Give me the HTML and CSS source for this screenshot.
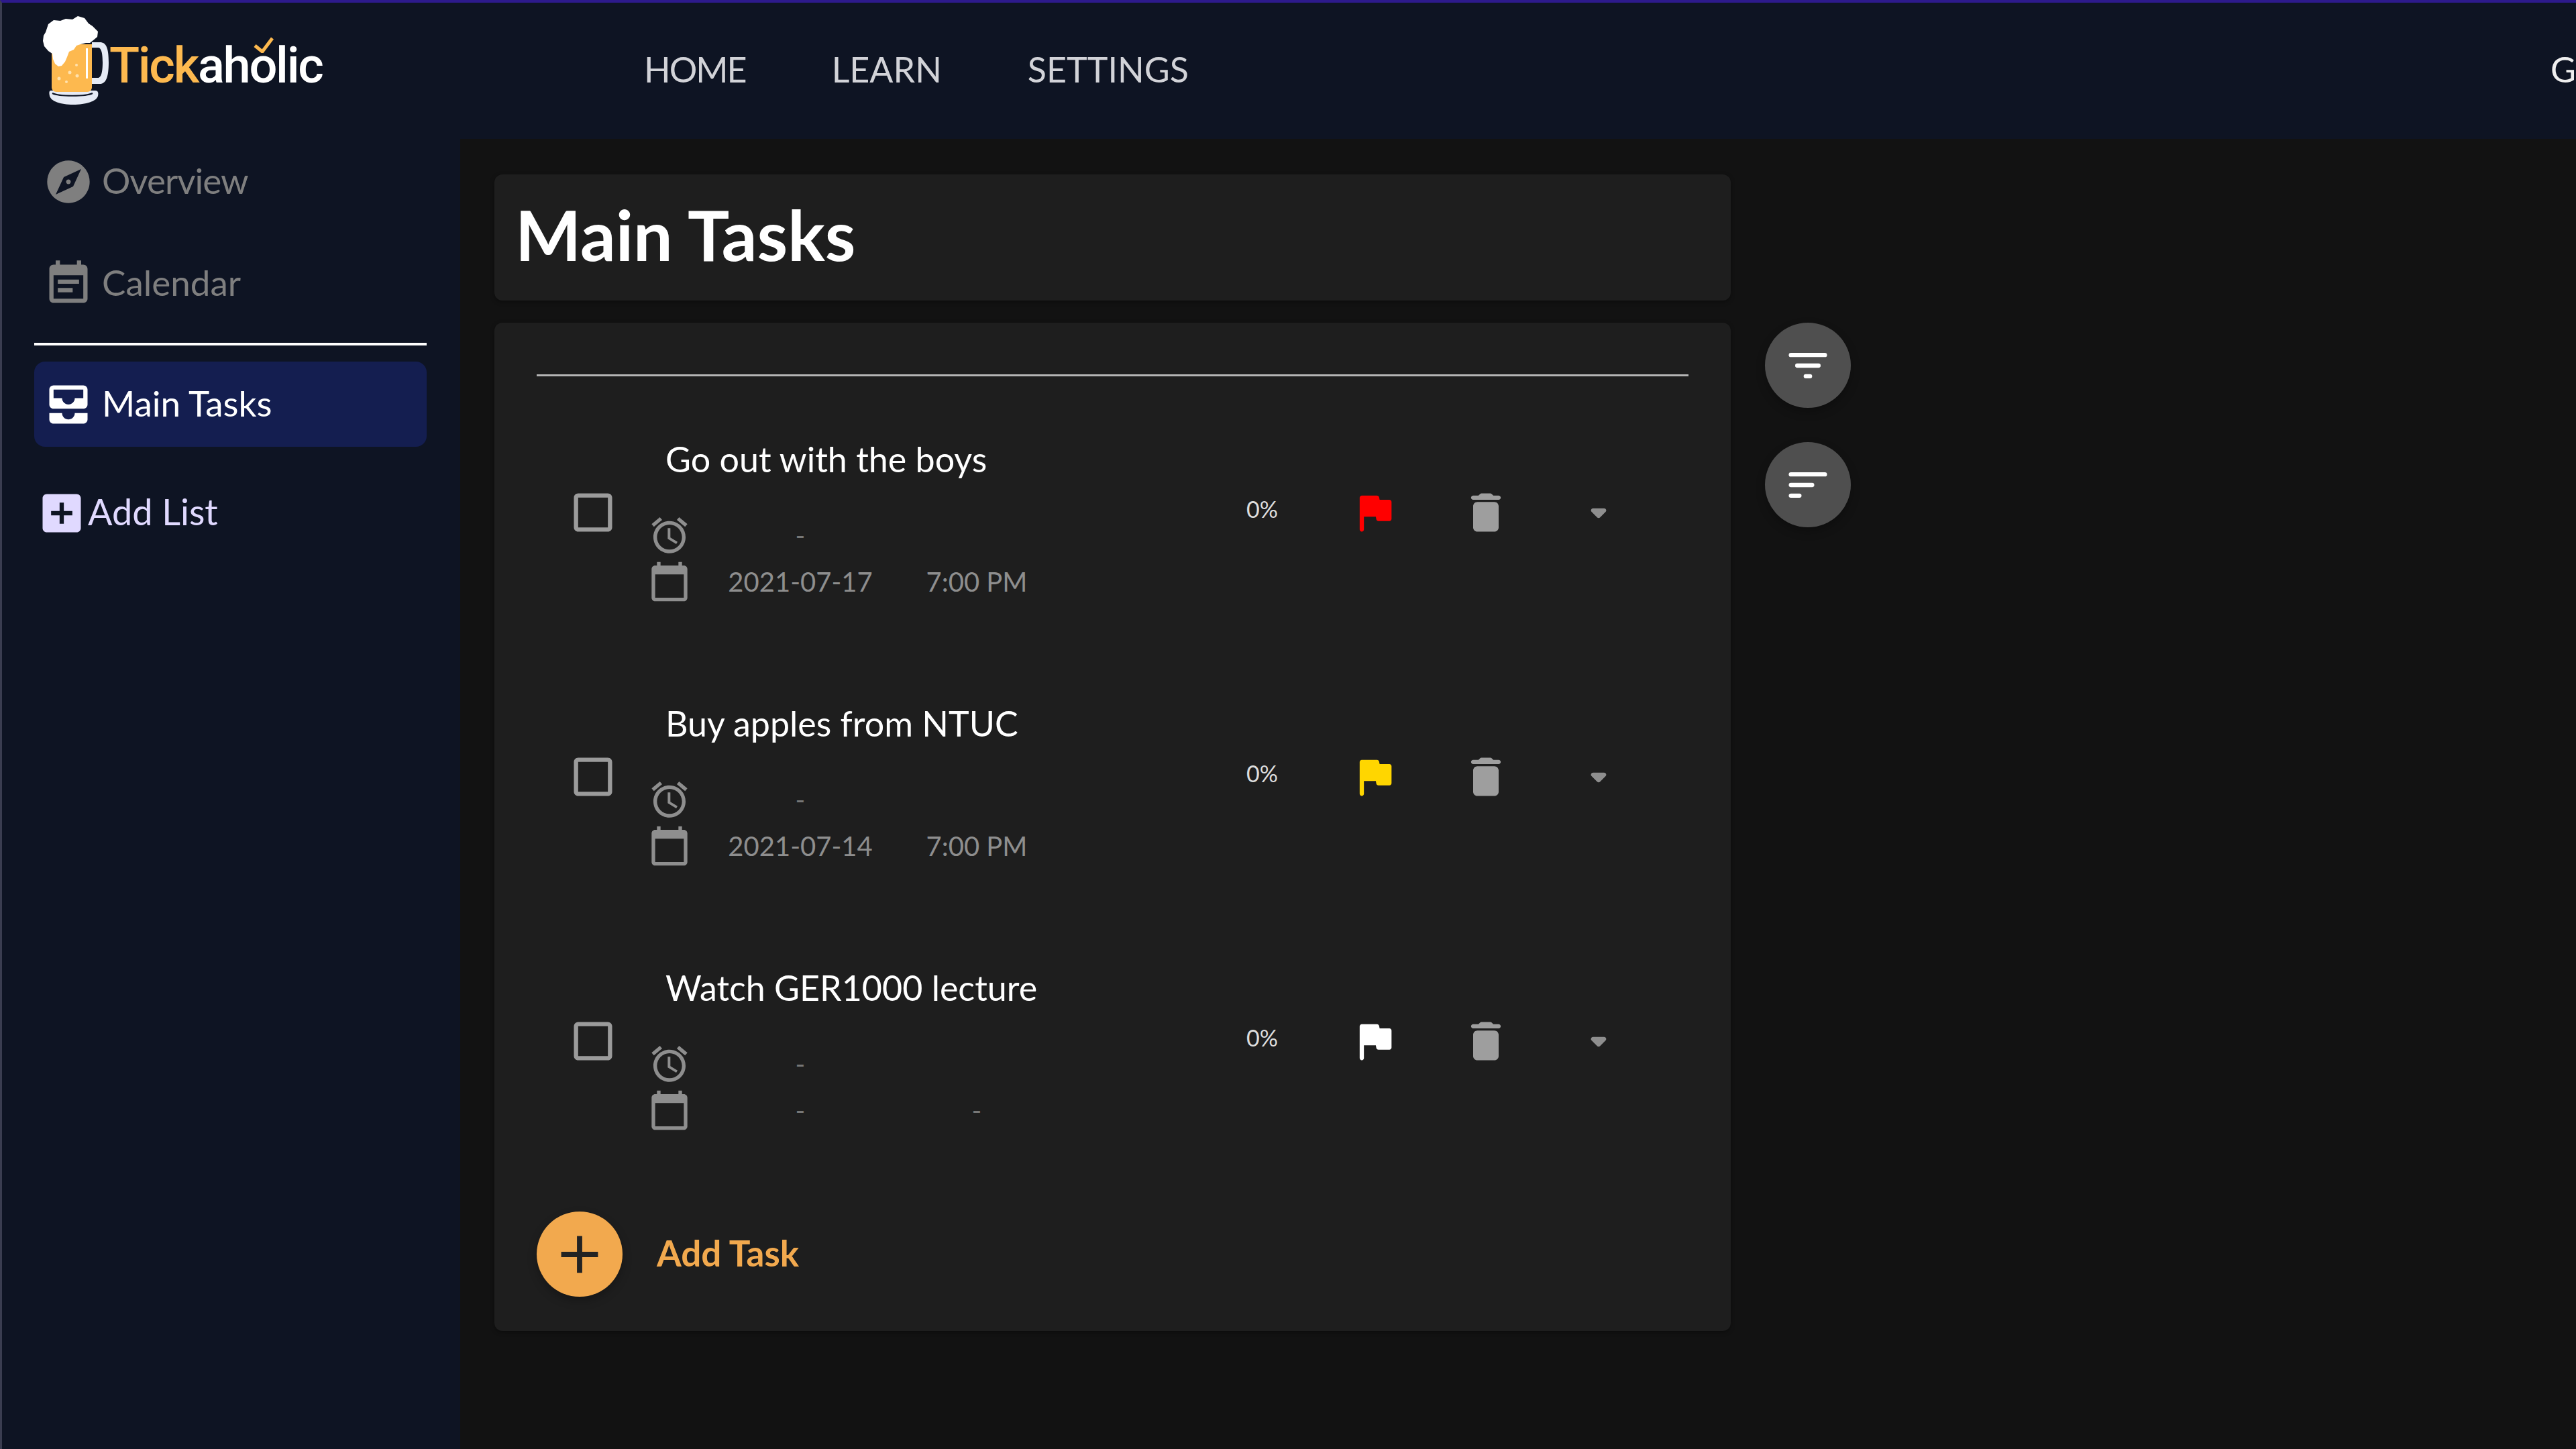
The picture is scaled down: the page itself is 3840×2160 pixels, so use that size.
FILE: index.html
```html
<!DOCTYPE html>
<html lang="en">
<head>
<meta charset="utf-8">
<title>Tickaholic</title>
<link rel="stylesheet" href="styles.css">
</head>
<body>
<header class="topbar">
  <a class="logo">
    <svg class="mug" viewBox="60 20 106 140" width="106" height="140">
      <path fill="#e6ebf5" d="M76 135h66c4 0 5 3 4 8-2 8-18 13-37 13s-33-5-35-13c-1-5-1-8 2-8z"/>
      <path fill="none" stroke="#0e1423" stroke-width="2" d="M78 139c10 5 50 5 60 0"/>
      <path fill="#e6ebf5" d="M137 63h12c9 0 13 8 13 30s-4 32-13 32h-12v-9h9c4 0 7-6 7-23s-3-22-7-22h-9z"/>
      <path fill="#fdb94f" d="M77 66h60v64c0 4-3 7-7 7H84c-4 0-7-3-7-7z"/>
      <path fill="#fff" d="M128 72h3v45h-3z"/>
      <path fill="#fff" d="M72 36l8-6 10 1 8-3 10 1 8-5 10 3 6 8 6 4 8 8-1 8-6 5-5 4-6 0-8 2-6 2-4 6-7 3-3 8-3 7-5 6-5 1-5-4-3-7-1-8-6-4-6-7-2-8 1-8 3-5z"/>
      <g fill="#ffe2ae"><circle cx="88" cy="117" r="2.5"/><circle cx="104" cy="108" r="2.5"/><circle cx="115" cy="113" r="2.5"/><circle cx="114" cy="97" r="2"/><circle cx="99" cy="122" r="2"/></g>
    </svg>
    <span class="logo-text"><span class="logo-tick">Tick</span>aholic</span>
    <svg class="logo-check" viewBox="0 0 30 24" width="30" height="24"><path fill="none" stroke="#fdb94f" stroke-width="5" d="M2 13l11 9L28 2"/></svg>
  </a>
  <nav class="nav">
    <a class="nav-home">HOME</a>
    <a>LEARN</a>
    <a>SETTINGS</a>
  </nav>
  <div class="user">G</div>
</header>
<div class="body">
  <aside class="sidebar">
    <div class="side-item muted side-tight">
      <svg class="ic76" viewBox="0 0 24 24"><path d="M12 10.9c-.61 0-1.1.49-1.1 1.1s.49 1.1 1.1 1.1c.61 0 1.1-.49 1.1-1.1s-.49-1.1-1.1-1.1zM12 2C6.48 2 2 6.48 2 12s4.48 10 10 10 10-4.48 10-10S17.52 2 12 2zm2.19 12.19L6 18l3.81-8.19L18 6l-3.79 8.19z"/></svg>
      <span>Overview</span>
    </div>
    <div class="side-item muted">
      <svg class="ic76" viewBox="0 0 24 24"><path d="M17 10H7v2h10v-2zm2-7h-1V1h-2v2H8V1H6v2H5c-1.11 0-1.99.9-1.99 2L3 19c0 1.1.89 2 2 2h14c1.1 0 2-.9 2-2V5c0-1.1-.9-2-2-2zm0 16H5V8h14v11zm-5-5H7v2h7v-2z"/></svg>
      <span>Calendar</span>
    </div>
    <hr class="side-rule">
    <div class="side-item active">
      <svg class="ic76" viewBox="0 0 24 24"><path d="M19 3H5c-1.1 0-2 .9-2 2v7c0 1.1.9 2 2 2h14c1.1 0 2-.9 2-2V5c0-1.1-.9-2-2-2zm0 6h-4c0 1.62-1.38 3-3 3s-3-1.38-3-3H5V5h14v4zm-4 7h6v3c0 1.1-.9 2-2 2H5c-1.1 0-2-.9-2-2v-3h6c0 1.66 1.34 3 3 3s3-1.34 3-3z"/></svg>
      <span>Main Tasks</span>
    </div>
    <div class="add-list">
      <svg class="ic76" viewBox="0 0 24 24"><path d="M19 3H5c-1.11 0-2 .9-2 2v14c0 1.1.89 2 2 2h14c1.1 0 2-.9 2-2V5c0-1.1-.9-2-2-2zm-2 10h-4v4h-2v-4H7v-2h4V7h2v4h4v2z"/></svg>
      <span>Add List</span>
    </div>
  </aside>
  <main class="main">
    <div class="column">
      <section class="card title-card"><h1>Main Tasks</h1></section>
      <section class="card list-card">
        <hr class="list-rule">

        <div class="row">
          <svg class="ic76 check" viewBox="0 0 24 24"><path d="M19 5v14H5V5h14m0-2H5c-1.1 0-2 .9-2 2v14c0 1.1.9 2 2 2h14c1.1 0 2-.9 2-2V5c0-1.1-.9-2-2-2z"/></svg>
          <div class="details">
            <div class="task-title">Go out with the boys</div>
            <div class="meta">
              <svg class="ic64" viewBox="0 0 24 24"><path d="M22 5.72l-4.6-3.86-1.29 1.53 4.6 3.86L22 5.72zM7.88 3.39L6.6 1.86 2 5.71l1.29 1.53 4.59-3.85zM12.5 8H11v6l4.75 2.85.75-1.23-4-2.37V8zM12 4c-4.97 0-9 4.03-9 9s4.02 9 9 9c4.97 0 9-4.03 9-9s-4.03-9-9-9zm0 16c-3.87 0-7-3.13-7-7s3.13-7 7-7 7 3.13 7 7-3.13 7-7 7z"/></svg>
              <span class="dash">-</span><span></span>
              <svg class="ic64" viewBox="0 0 24 24"><path d="M20 3h-1V1h-2v2H7V1H5v2H4c-1.1 0-2 .9-2 2v16c0 1.1.9 2 2 2h16c1.1 0 2-.9 2-2V5c0-1.1-.9-2-2-2zm0 18H4V8h16v13z"/></svg>
              <span>2021-07-17</span><span>7:00 PM</span>
            </div>
          </div>
          <span class="pct">0%</span>
          <svg class="ic76 flag flag-red" viewBox="0 0 24 24"><path d="M14.4 6l-.24-1.2c-.09-.46-.5-.8-.98-.8H6c-.55 0-1 .45-1 1v15c0 .55.45 1 1 1s1-.45 1-1v-6h5.6l.24 1.2c.09.47.5.8.98.8H19c.55 0 1-.45 1-1V7c0-.55-.45-1-1-1h-4.6z"/></svg>
          <svg class="ic76 trash" viewBox="0 0 24 24"><path d="M6 19c0 1.1.9 2 2 2h8c1.1 0 2-.9 2-2V9c0-1.1-.9-2-2-2H8c-1.1 0-2 .9-2 2v10zM18 4h-2.5l-.71-.71c-.18-.18-.44-.29-.7-.29H9.91c-.26 0-.52.11-.7.29L8.5 4H6c-.55 0-1 .45-1 1s.45 1 1 1h12c.55 0 1-.45 1-1s-.45-1-1-1z"/></svg>
          <svg class="ic76 caret" viewBox="0 0 24 24"><path d="M8.71 11.71l2.59 2.59c.39.39 1.02.39 1.41 0l2.59-2.59c.63-.63.18-1.71-.71-1.71H9.41c-.89 0-1.33 1.08-.7 1.71z"/></svg>
        </div>

        <div class="row">
          <svg class="ic76 check" viewBox="0 0 24 24"><path d="M19 5v14H5V5h14m0-2H5c-1.1 0-2 .9-2 2v14c0 1.1.9 2 2 2h14c1.1 0 2-.9 2-2V5c0-1.1-.9-2-2-2z"/></svg>
          <div class="details">
            <div class="task-title">Buy apples from NTUC</div>
            <div class="meta">
              <svg class="ic64" viewBox="0 0 24 24"><path d="M22 5.72l-4.6-3.86-1.29 1.53 4.6 3.86L22 5.72zM7.88 3.39L6.6 1.86 2 5.71l1.29 1.53 4.59-3.85zM12.5 8H11v6l4.75 2.85.75-1.23-4-2.37V8zM12 4c-4.97 0-9 4.03-9 9s4.02 9 9 9c4.97 0 9-4.03 9-9s-4.03-9-9-9zm0 16c-3.87 0-7-3.13-7-7s3.13-7 7-7 7 3.13 7 7-3.13 7-7 7z"/></svg>
              <span class="dash">-</span><span></span>
              <svg class="ic64" viewBox="0 0 24 24"><path d="M20 3h-1V1h-2v2H7V1H5v2H4c-1.1 0-2 .9-2 2v16c0 1.1.9 2 2 2h16c1.1 0 2-.9 2-2V5c0-1.1-.9-2-2-2zm0 18H4V8h16v13z"/></svg>
              <span>2021-07-14</span><span>7:00 PM</span>
            </div>
          </div>
          <span class="pct">0%</span>
          <svg class="ic76 flag flag-yellow" viewBox="0 0 24 24"><path d="M14.4 6l-.24-1.2c-.09-.46-.5-.8-.98-.8H6c-.55 0-1 .45-1 1v15c0 .55.45 1 1 1s1-.45 1-1v-6h5.6l.24 1.2c.09.47.5.8.98.8H19c.55 0 1-.45 1-1V7c0-.55-.45-1-1-1h-4.6z"/></svg>
          <svg class="ic76 trash" viewBox="0 0 24 24"><path d="M6 19c0 1.1.9 2 2 2h8c1.1 0 2-.9 2-2V9c0-1.1-.9-2-2-2H8c-1.1 0-2 .9-2 2v10zM18 4h-2.5l-.71-.71c-.18-.18-.44-.29-.7-.29H9.91c-.26 0-.52.11-.7.29L8.5 4H6c-.55 0-1 .45-1 1s.45 1 1 1h12c.55 0 1-.45 1-1s-.45-1-1-1z"/></svg>
          <svg class="ic76 caret" viewBox="0 0 24 24"><path d="M8.71 11.71l2.59 2.59c.39.39 1.02.39 1.41 0l2.59-2.59c.63-.63.18-1.71-.71-1.71H9.41c-.89 0-1.33 1.08-.7 1.71z"/></svg>
        </div>

        <div class="row">
          <svg class="ic76 check" viewBox="0 0 24 24"><path d="M19 5v14H5V5h14m0-2H5c-1.1 0-2 .9-2 2v14c0 1.1.9 2 2 2h14c1.1 0 2-.9 2-2V5c0-1.1-.9-2-2-2z"/></svg>
          <div class="details">
            <div class="task-title">Watch GER1000 lecture</div>
            <div class="meta">
              <svg class="ic64" viewBox="0 0 24 24"><path d="M22 5.72l-4.6-3.86-1.29 1.53 4.6 3.86L22 5.72zM7.88 3.39L6.6 1.86 2 5.71l1.29 1.53 4.59-3.85zM12.5 8H11v6l4.75 2.85.75-1.23-4-2.37V8zM12 4c-4.97 0-9 4.03-9 9s4.02 9 9 9c4.97 0 9-4.03 9-9s-4.03-9-9-9zm0 16c-3.87 0-7-3.13-7-7s3.13-7 7-7 7 3.13 7 7-3.13 7-7 7z"/></svg>
              <span class="dash">-</span><span></span>
              <svg class="ic64" viewBox="0 0 24 24"><path d="M20 3h-1V1h-2v2H7V1H5v2H4c-1.1 0-2 .9-2 2v16c0 1.1.9 2 2 2h16c1.1 0 2-.9 2-2V5c0-1.1-.9-2-2-2zm0 18H4V8h16v13z"/></svg>
              <span class="dash">-</span><span class="dash">-</span>
            </div>
          </div>
          <span class="pct">0%</span>
          <svg class="ic76 flag flag-white" viewBox="0 0 24 24"><path d="M14.4 6l-.24-1.2c-.09-.46-.5-.8-.98-.8H6c-.55 0-1 .45-1 1v15c0 .55.45 1 1 1s1-.45 1-1v-6h5.6l.24 1.2c.09.47.5.8.98.8H19c.55 0 1-.45 1-1V7c0-.55-.45-1-1-1h-4.6z"/></svg>
          <svg class="ic76 trash" viewBox="0 0 24 24"><path d="M6 19c0 1.1.9 2 2 2h8c1.1 0 2-.9 2-2V9c0-1.1-.9-2-2-2H8c-1.1 0-2 .9-2 2v10zM18 4h-2.5l-.71-.71c-.18-.18-.44-.29-.7-.29H9.91c-.26 0-.52.11-.7.29L8.5 4H6c-.55 0-1 .45-1 1s.45 1 1 1h12c.55 0 1-.45 1-1s-.45-1-1-1z"/></svg>
          <svg class="ic76 caret" viewBox="0 0 24 24"><path d="M8.71 11.71l2.59 2.59c.39.39 1.02.39 1.41 0l2.59-2.59c.63-.63.18-1.71-.71-1.71H9.41c-.89 0-1.33 1.08-.7 1.71z"/></svg>
        </div>

        <div class="add-task">
          <span class="fab fab-orange"><svg class="ic94" viewBox="0 0 24 24"><path d="M19 13h-6v6h-2v-6H5v-2h6V5h2v6h6v2z"/></svg></span>
          <span class="add-task-label">Add Task</span>
        </div>
      </section>
    </div>
    <div class="fabs">
      <span class="fab fab-grey"><svg class="ic76" viewBox="0 0 24 24"><rect x="3" y="6" width="18" height="2" rx="1"/><rect x="6" y="11" width="12" height="2" rx="1"/><rect x="10" y="16" width="4" height="2" rx="1"/></svg></span>
      <span class="fab fab-grey"><svg class="ic76" viewBox="0 0 24 24"><rect x="3" y="6" width="18" height="2" rx="1"/><rect x="3" y="11" width="12" height="2" rx="1"/><rect x="3" y="16" width="6" height="2" rx="1"/></svg></span>
    </div>
  </main>
</div>
</body>
</html>
```

FILE: styles.css
```css
* { box-sizing: border-box; }
html, body { margin: 0; padding: 0; }
body {
  width: 3840px;
  height: 2160px;
  overflow: hidden;
  display: flex;
  flex-direction: column;
  background: #0e1423;
  border-top: 4px solid #2d1a8c;
  border-left: 3px solid #3a3d50;
  font-family: "Lato", "Noto Sans", sans-serif;
  color: #fff;
}
svg { display: block; flex: none; fill: currentColor; }
.ic76 { width: 76px; height: 76px; }
.ic64 { width: 64px; height: 64px; }
.ic94 { width: 94px; height: 94px; }

/* top bar */
.topbar { height: 203px; flex: none; display: flex; align-items: center; }
.logo { position: relative; width: 957px; display: flex; align-items: flex-start; height: 203px; flex: none; }
.mug { margin: 16px 0 0 57px; flex: none; }
.logo-text { margin: 54px 0 0 -3px; font: 500 74px/80px "Roboto", sans-serif; letter-spacing: -2.3px; color: #fff; }
.logo-tick { color: #fdb94f; }
.logo-check { position: absolute; left: 375px; top: 51px; }
.nav { display: flex; gap: 128px; font-size: 52px; color: #d2d3d8; margin-top: -5px; }
.nav-home { letter-spacing: -2px; }
.user { margin-left: auto; width: 38px; font-size: 52px; color: #eee; margin-top: -5px; }

/* layout */
.body { flex: 1; display: flex; min-height: 0; }
.sidebar { width: 683px; flex: none; padding: 0 50px 0 48px; }
.main { flex: 1; background: #121212; display: flex; align-items: flex-start; padding: 53px 0 0 51px; gap: 51px; }
.column { width: 1843px; display: flex; flex-direction: column; gap: 33px; }

/* sidebar */
.side-item { display: flex; align-items: center; gap: 12px; height: 127px; padding-left: 13px; font-size: 53px; margin-bottom: 25px; border-radius: 16px; }
.side-item span { margin-bottom: 5px; }
.side-tight { letter-spacing: -1px; }
.muted { color: #7f7f7f; }
.active { background: #141e50; color: #fff; margin-bottom: 0; }
.side-rule { border: 0; height: 4px; background: #fff; margin: 21px 0 24px; }
.add-list { display: flex; align-items: center; color: #e0d9ff; font-size: 54px; margin: 61px 0 0 3px; gap: 1px; }
.add-list span { margin-bottom: 5px; }

/* cards */
.card { background: #1e1e1e; border-radius: 12px; box-shadow: 0 2px 6px rgba(0,0,0,.35); }
.title-card { height: 188px; padding: 0 0 10px 31px; display: flex; align-items: center; }
.title-card h1 { margin: 0; font-size: 104px; font-weight: 700; line-height: 1; }
.list-card { padding: 77px 63px 51px; }
.list-rule { border: 0; height: 3px; background: #b5b5b5; margin: 0 0 6px; }

/* rows */
.row { height: 394px; display: flex; align-items: center; padding-left: 46px; }
.check { color: #9b9b9b; }
.details { align-self: flex-start; width: 887px; margin-left: 49px; padding-top: 84px; }
.task-title { font-size: 52px; line-height: 66px; padding-left: 21px; margin-bottom: 46px; }
.meta { display: grid; grid-template-columns: 53px 338px 188px; grid-auto-rows: 69px; align-items: center; justify-items: center; font-size: 40px; color: #8e8e8e; }
.meta .ic64 { color: #8e8e8e; }
.dash { color: #777; }
.pct { width: 47px; font-size: 34px; color: #ddd; margin-top: -12px; }
.flag { margin-left: 106px; }
.flag-red { color: #ff0000; }
.flag-yellow { color: #ffd600; }
.flag-white { color: #fff; }
.trash { color: #9e9e9e; margin-left: 90px; }
.caret { color: #8e8e8e; margin-left: 92px; }

/* add task */
.add-task { display: flex; align-items: center; gap: 51px; margin-top: 57px; }
.add-task-label { font-size: 53px; font-weight: 700; color: #f2a94e; margin-bottom: 4px; }
.fab { width: 128px; height: 127px; border-radius: 50%; display: flex; align-items: center; justify-content: center; flex: none; box-shadow: 0 6px 14px rgba(0,0,0,.25); }
.fab-orange { background: #f2a94e; color: #232323; }
.fab-grey { background: #4f4f4f; color: #fff; }
.fabs { display: flex; flex-direction: column; gap: 51px; margin-top: 221px; }
```
